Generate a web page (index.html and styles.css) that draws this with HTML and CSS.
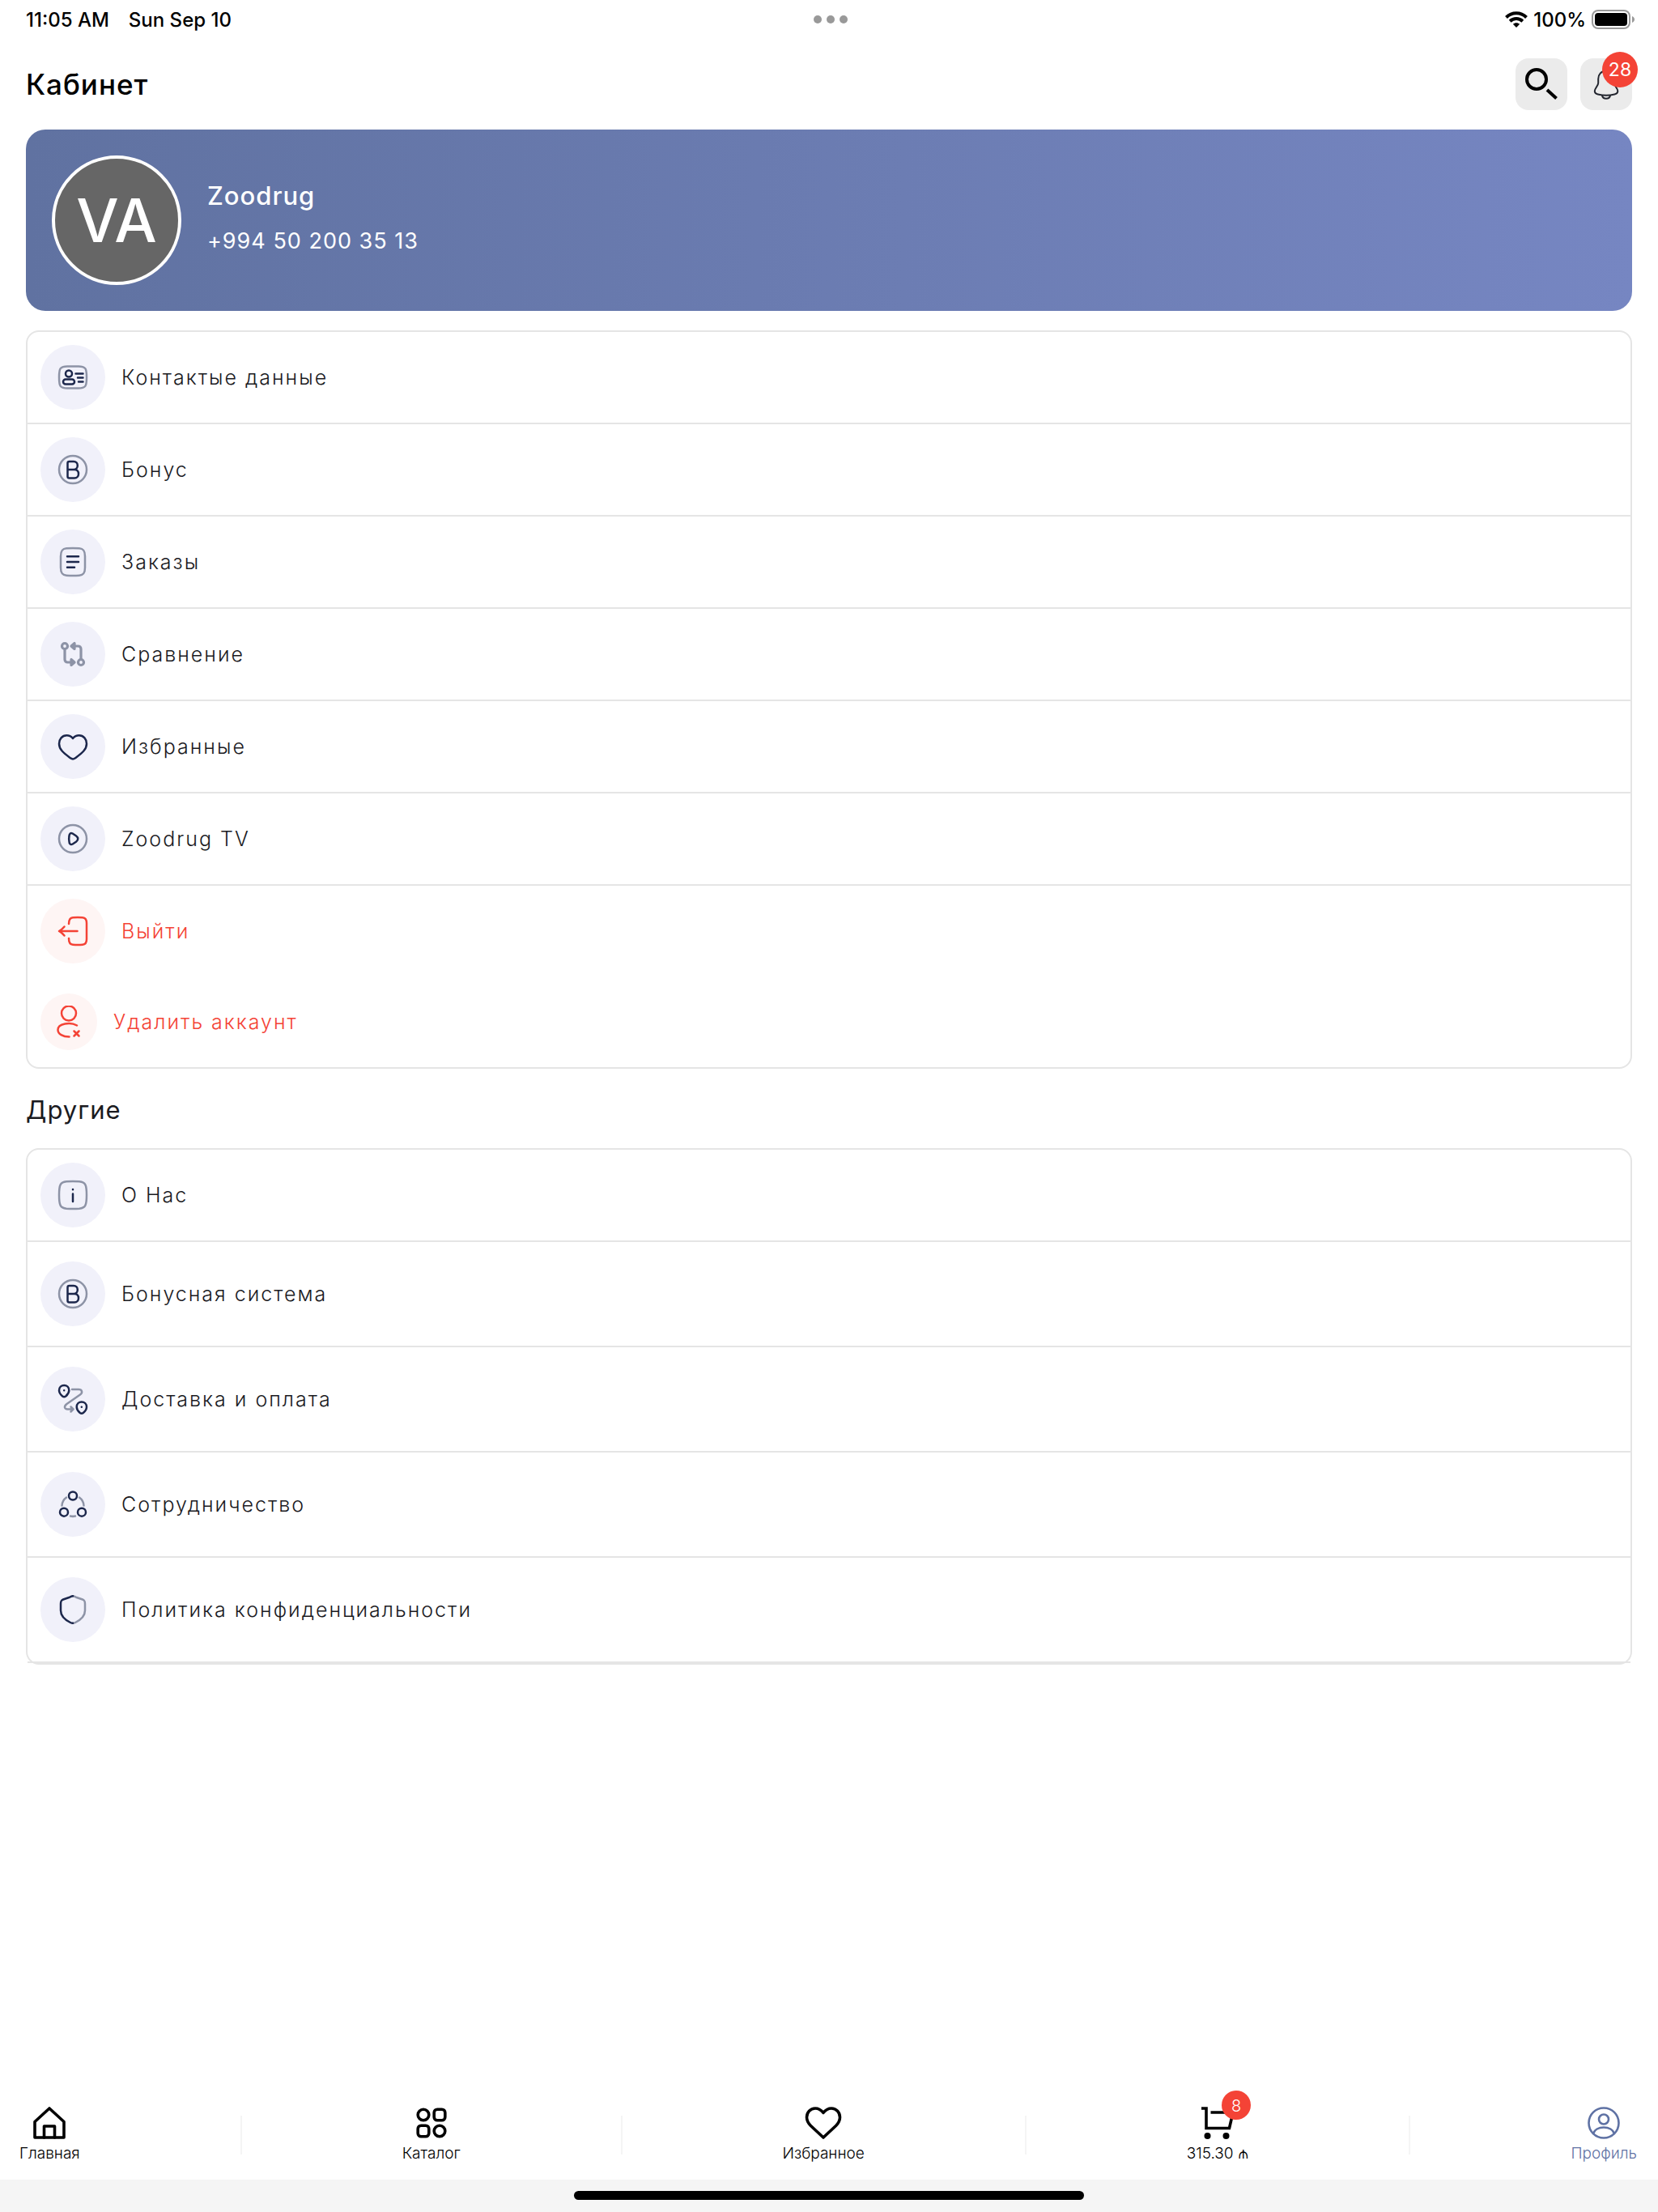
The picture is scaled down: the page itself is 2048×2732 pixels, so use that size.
FILE: index.html
```html
<!DOCTYPE html>
<html lang="ru">
<head>
    <meta charset="UTF-8">
    <meta name="viewport" content="width=device-width, initial-scale=1.0">
    <title>Кабинет</title>
    <link rel="stylesheet" href="styles.css">
</head>
<body>
    <div class="status-bar">
        <div class="status-left">
            <span>11:05 AM</span>
            <span>Sun Sep 10</span>
        </div>
        <div class="status-dots"><i></i><i></i><i></i></div>
        <div class="status-right">
            <svg class="wifi" viewBox="0 0 28 20" aria-hidden="true">
                <path d="M1.5 7.5C8.5 .5 19.5 .5 26.500 7.5" />
                <path d="M6.200 12.200C10.500 8 17.500 8 21.800 12.200" />
                <path class="fill" d="M14 20l-4.200-4.200c2.300-2.200 6.100-2.200 8.400 0z" />
            </svg>
            <span>100%</span>
            <svg class="battery" viewBox="0 0 54 24" aria-hidden="true">
                <rect class="shell" x="1" y="1" width="46" height="22" rx="7" />
                <rect x="4" y="4" width="40" height="16" rx="4" />
                <path class="tip" d="M50 8c4 1.500 4 6.500 0 8z" />
            </svg>
        </div>
    </div>

    <header class="header">
        <h1>Кабинет</h1>
        <div class="header-actions">
            <button type="button" class="icon-button" aria-label="Поиск">
                <svg class="search" viewBox="0 0 40 40" aria-hidden="true">
                    <circle cx="14" cy="14" r="12" />
                    <path d="M27 27l11.500 10.500" />
                </svg>
            </button>
            <button type="button" class="icon-button" aria-label="Уведомления">
                <svg class="bell" viewBox="0 0 32 40" aria-hidden="true">
                    <path d="M16 3.500c-6 0-9.800 4.500-9.800 10v5c0 3.500-4.400 6.500-4.400 10 0 2.500 2 3.500 4 4 6.500 1.600 14 1.600 20.500 0 2-.5 4-1.500 4-4 0-3.500-4.500-6.500-4.500-10v-5c0-5.500-3.800-10-9.800-10z" />
                    <path d="M11 34c1 5 9 5 10 0" />
                </svg>
                <span class="badge">28</span>
            </button>
        </div>
    </header>

    <main class="content">
        <section class="profile">
            <div class="avatar">VA</div>
            <div class="profile-text">
                <p class="profile-name">Zoodrug</p>
                <p class="profile-phone">+994 50 200 35 13</p>
            </div>
        </section>

        <nav class="menu">
            <a href="#" class="menu-item">
                <span class="menu-icon">
                    <svg viewBox="0 0 40 40" aria-hidden="true">
                        <path class="light" d="M3 20c0-6 0-9 1.800-11S9 6.500 13 6.500h14c4 0 6.400.5 8.200 2.500S37 14 37 20s0 9-1.800 11-4.200 2.500-8.200 2.500H13c-4 0-6.400-.5-8.200-2.500S3 26 3 20z" />
                        <circle cx="15" cy="15.500" r="4" />
                        <rect x="8" y="22.500" width="14" height="6" rx="3" />
                        <path d="M23.500 15.500h9M26 20.500h6.500M27 25.500h5.500" />
                    </svg>
                </span>
                <span>Контактые данные</span>
            </a>
            <a href="#" class="menu-item">
                <span class="menu-icon">
                    <svg viewBox="0 0 40 40" aria-hidden="true">
                        <circle class="light" cx="20" cy="20" r="17" />
                        <path d="M13.500 12c0-1.200.8-2 2-2h5.500c3 0 4.800 2.200 4.800 5s-1.800 5-4.800 5h-7.500zM13.500 20H22c3 0 5 2.200 5 5.200s-2 5.300-5 5.300h-6.500c-1.200 0-2-.8-2-2z" />
                    </svg>
                </span>
                <span>Бонус</span>
            </a>
            <a href="#" class="menu-item">
                <span class="menu-icon">
                    <svg viewBox="0 0 40 40" aria-hidden="true">
                        <path class="light" d="M5 13c0-7 2-9.300 7-9.700 5-.4 11-.4 16 0 5 .4 7 2.700 7 9.700v14c0 7-2 9.300-7 9.700-5 .4-11 .4-16 0-5-.4-7-2.700-7-9.700z" />
                        <path d="M13 13.300h14M13 20h14M13 26.700h9" />
                    </svg>
                </span>
                <span>Заказы</span>
            </a>
            <a href="#" class="menu-item">
                <span class="menu-icon">
                    <svg class="compare" viewBox="0 0 40 40" aria-hidden="true">
                        <circle cx="10" cy="10" r="3.500" />
                        <circle cx="30" cy="30" r="3.500" />
                        <path d="M10 14v12.500c0 2 1.500 3.500 3.500 3.500h7M30 26V13.500c0-2-1.500-3.500-3.500-3.500h-7" />
                        <path d="M18 26.500v7l4-3.500zM22 6.500v7L18 10z" />
                    </svg>
                </span>
                <span>Сравнение</span>
            </a>
            <a href="#" class="menu-item">
                <span class="menu-icon">
                    <svg viewBox="0 0 40 40" aria-hidden="true">
                        <path d="M20 10c-2.200-2.600-4.800-3.700-7.600-3.700C6.600 6.300 3 11 3 16.500c0 7.500 6 11.700 14 17.800 2.300 1.700 3.700 1.700 6 0 8-6.100 14-10.300 14-17.800C37 11 33.400 6.300 27.600 6.300c-2.800 0-5.400 1.100-7.600 3.700z" />
                    </svg>
                </span>
                <span>Избранные</span>
            </a>
            <a href="#" class="menu-item">
                <span class="menu-icon">
                    <svg viewBox="0 0 40 40" aria-hidden="true">
                        <circle class="light" cx="20" cy="20" r="17" />
                        <path d="M15.500 16.500c0-3 1.800-4.200 4.200-3l4.500 3c2.700 2 2.700 5 0 7l-4.500 3c-2.400 1.200-4.200 0-4.200-3-.4-2-.4-5 0-7z" />
                    </svg>
                </span>
                <span>Zoodrug TV</span>
            </a>
            <a href="#" class="menu-item danger last">
                <span class="menu-icon">
                    <svg viewBox="0 0 40 40" aria-hidden="true">
                        <path d="M15 11c0-5 1.500-7.500 5-7.800 4-.3 8-.3 12 0 3.500.3 5 2.300 5 6.800v20c0 4.500-1.500 6.500-5 6.800-4 .3-8 .3-12 0-3.500-.3-5-2.800-5-7.800" />
                        <path d="M25.500 20H3.500M9.500 14.500C7.500 17 5.500 18.500 3 20c2.500 1.500 4.500 3 6.500 5.500" />
                    </svg>
                </span>
                <span>Выйти</span>
            </a>
            <a href="#" class="menu-item danger compact last">
                <span class="menu-icon">
                    <svg viewBox="0 0 40 40" aria-hidden="true">
                        <circle cx="20" cy="9.500" r="9" />
                        <path d="M30 24.500C22 20 6.500 22 6.500 30c0 5 6 8.500 14 8.500" />
                        <path d="M26.500 31.500l6 6M32.500 31.500l-6 6" />
                    </svg>
                </span>
                <span>Удалить аккаунт</span>
            </a>
        </nav>

        <h2>Другие</h2>

        <nav class="menu tall">
            <a href="#" class="menu-item">
                <span class="menu-icon">
                    <svg viewBox="0 0 40 40" aria-hidden="true">
                        <path class="light" d="M3 20c0-13 1.500-15.800 9-16.700 5-.4 11-.4 16 0 7.500.9 9 3.700 9 16.700s-1.500 15.800-9 16.700c-5 .4-11 .4-16 0C4.500 35.800 3 33 3 20z" />
                        <path d="M20 18.500v9.500M20 13v.2" />
                    </svg>
                </span>
                <span>О Нас</span>
            </a>
            <a href="#" class="menu-item">
                <span class="menu-icon">
                    <svg viewBox="0 0 40 40" aria-hidden="true">
                        <circle class="light" cx="20" cy="20" r="17" />
                        <path d="M13.500 12c0-1.200.8-2 2-2h5.500c3 0 4.800 2.200 4.800 5s-1.800 5-4.800 5h-7.500zM13.500 20H22c3 0 5 2.200 5 5.200s-2 5.300-5 5.300h-6.500c-1.200 0-2-.8-2-2z" />
                    </svg>
                </span>
                <span>Бонусная система</span>
            </a>
            <a href="#" class="menu-item">
                <span class="menu-icon">
                    <svg viewBox="0 0 40 40" aria-hidden="true">
                        <path class="light" d="M19 8h8c4.500 0 5.500 4 2 6.500L12.500 26c-4 3-3 6.500 1 6.500h6M17.500 29.500l3 3-3 3" />
                        <path d="M9.200 3c3.400 0 6.100 2.500 6.100 6.200 0 3.400-2 5.500-4.100 7.300-1.300 1-2.700 1-4 0C5.100 14.700 3 12.600 3 9.200 3 5.500 5.800 3 9.200 3zM9.200 9.200v.1" />
                        <path d="M30.800 23.500c3.400 0 6.200 2.500 6.200 6.200 0 3.400-2.100 5.500-4.200 7.300-1.300 1-2.700 1-4 0-2.100-1.800-4.100-3.900-4.100-7.300 0-3.700 2.700-6.200 6.100-6.200zM30.800 29.700v.1" />
                    </svg>
                </span>
                <span>Доставка и оплата</span>
            </a>
            <a href="#" class="menu-item">
                <span class="menu-icon">
                    <svg viewBox="0 0 40 40" aria-hidden="true">
                        <circle cx="20" cy="9.500" r="5" />
                        <circle cx="9" cy="29.700" r="5" />
                        <circle cx="31" cy="29.700" r="5" />
                        <path class="light" d="M12 11.500C8.500 14 6.700 17.500 6.500 21.500M28 11.500c3.500 2.500 5.300 6 5.500 10M17 34.500c2 .5 4 .5 6 0" />
                    </svg>
                </span>
                <span>Сотрудничество</span>
            </a>
            <a href="#" class="menu-item">
                <span class="menu-icon">
                    <svg viewBox="0 0 40 40" aria-hidden="true">
                        <path class="light" d="M20 3.300c1 0 2 .5 4 1.400l8 2.800c2.500 1 3 2 3 5.500V21c0 8-7 12.500-12 15-1 .5-2 .8-3 .8" />
                        <path d="M20 3.300c-1 0-2 .5-4 1.400L8 7.500C5.500 8.500 5 9.500 5 13v8c0 8 7 12.500 12 15 1 .5 2 .8 3 .8" />
                    </svg>
                </span>
                <span>Политика конфиденциальности</span>
            </a>
        </nav>
    </main>

    <nav class="tab-bar">
        <a href="#" class="tab">
            <svg viewBox="0 0 40 40" aria-hidden="true">
                <path d="M2 18.500L20 2l18 16.500V38H2z" />
                <path d="M13.500 38V24h13v14" />
            </svg>
            <span>Главная</span>
        </a>
        <span class="divider"></span>
        <a href="#" class="tab">
            <svg viewBox="0 0 40 40" aria-hidden="true">
                <circle cx="10" cy="10" r="6.800" />
                <rect x="23.200" y="3.200" width="13.600" height="13.600" rx="4" />
                <rect x="3.200" y="23.200" width="13.600" height="13.600" rx="4" />
                <circle cx="30" cy="30" r="6.800" />
            </svg>
            <span>Каталог</span>
        </a>
        <span class="divider"></span>
        <a href="#" class="tab">
            <svg class="wide" viewBox="0 0 46 40" aria-hidden="true">
                <path d="M23 7.500C20 3.500 17 2 13 2 7 2 2.500 7 2.500 13c0 5 2 7.500 5 10.500L23 38l15.500-14.500c3-3 5-5.500 5-10.500C43.500 7 39 2 33 2c-4 0-7 1.500-10 5.500z" />
            </svg>
            <span>Избранное</span>
        </a>
        <span class="divider"></span>
        <a href="#" class="tab">
            <span class="tab-icon">
                <svg viewBox="0 0 40 40" aria-hidden="true">
                    <path class="sharp" d="M0 2h6v24.500h28.500l4.500-19.500H11.500" />
                    <circle class="dot" cx="7.500" cy="36" r="4" />
                    <circle class="dot" cx="30.500" cy="36" r="4" />
                </svg>
                <span class="badge small">8</span>
            </span>
            <span>315.30 ₼</span>
        </a>
        <span class="divider"></span>
        <a href="#" class="tab active">
            <svg viewBox="0 0 40 40" aria-hidden="true">
                <circle cx="20" cy="20" r="18.500" />
                <circle cx="20" cy="15.500" r="6" />
                <path d="M7 33c1.500-4.500 6.500-7.500 13-7.500S31.500 28.500 33 33" />
            </svg>
            <span>Профиль</span>
        </a>
    </nav>
    <div class="home-area"><div class="home-indicator"></div></div>
</body>
</html>
```
FILE: styles.css
```css
* {
    box-sizing: border-box;
}

body {
    font-family: Inter, 'Liberation Sans', sans-serif;
    margin: 0;
    min-height: 100vh;
    display: flex;
    flex-direction: column;
    background: #fff;
    color: #000;
}

h1, h2, p {
    margin: 0;
}

a {
    color: inherit;
    text-decoration: none;
}

svg {
    display: block;
    fill: none;
    stroke: currentColor;
    stroke-linecap: round;
    stroke-linejoin: round;
}

/* status bar */
.status-bar {
    display: grid;
    grid-template-columns: 1fr auto 1fr;
    align-items: center;
    height: 48px;
    padding: 0 28px 0 32px;
    font-size: 24px;
    font-weight: 500;
}

.status-left {
    display: flex;
    gap: 24px;
}

.status-dots {
    display: flex;
    gap: 6px;
}

.status-dots i {
    width: 10px;
    height: 10px;
    border-radius: 50%;
    background: #999;
}

.status-right {
    display: flex;
    align-items: center;
    justify-content: flex-end;
    gap: 7px;
}

.wifi {
    width: 28px;
    height: 20px;
    stroke-width: 4;
    stroke-linecap: butt;
}

.wifi .fill {
    fill: #000;
    stroke: none;
}

.battery {
    width: 54px;
    height: 24px;
    fill: #000;
    stroke: none;
}

.battery .shell {
    fill: none;
    stroke: #999;
    stroke-width: 2;
}

.battery .tip {
    fill: #999;
}

/* header */
.header {
    display: flex;
    align-items: center;
    justify-content: space-between;
    padding: 24px 32px;
}

h1 {
    font-size: 35px;
    font-weight: 500;
    line-height: 40px;
    letter-spacing: 1px;
}

.header-actions {
    display: flex;
    gap: 16px;
}

.icon-button {
    position: relative;
    display: flex;
    align-items: center;
    justify-content: center;
    width: 64px;
    height: 64px;
    padding: 0;
    border: none;
    border-radius: 16px;
    background: #ebebeb;
    color: #000;
    font-family: inherit;
    cursor: pointer;
}

.search {
    width: 40px;
    height: 40px;
    stroke-width: 4;
    stroke-linecap: butt;
}

.bell {
    width: 32px;
    height: 40px;
    color: #23262f;
    stroke-width: 2;
}

.badge {
    position: absolute;
    top: -8px;
    right: -7px;
    width: 44px;
    height: 44px;
    border-radius: 50%;
    background: #f44336;
    color: #fff;
    font-size: 23px;
    line-height: 44px;
    text-align: center;
}

.badge.small {
    top: -20px;
    right: -21px;
    width: 36px;
    height: 36px;
    font-size: 20px;
    line-height: 38px;
}

/* content */
.content {
    flex: 1;
    padding: 0 32px;
}

.profile {
    display: flex;
    align-items: center;
    gap: 32px;
    padding: 32px;
    margin-bottom: 24px;
    border-radius: 24px;
    background: linear-gradient(90deg, #6072a1, #7686c2);
    color: #fff;
}

.profile-text {
    padding-bottom: 4px;
}

.avatar {
    width: 160px;
    height: 160px;
    border: 4px solid #fff;
    border-radius: 50%;
    background: #666;
    font-size: 74px;
    font-weight: 500;
    line-height: 152px;
    text-align: center;
}

.profile-name {
    margin-bottom: 16px;
    font-size: 31px;
    font-weight: 500;
    line-height: 40px;
    letter-spacing: 1px;
}

.profile-phone {
    font-size: 27px;
    line-height: 40px;
    letter-spacing: 1px;
}

.menu {
    border: 2px solid #e5e5e5;
    border-radius: 16px;
}

.menu-item {
    display: flex;
    align-items: center;
    gap: 20px;
    padding: 16px;
    border-bottom: 2px solid #e5e5e5;
    color: #1b1b1f;
    font-size: 25px;
    font-weight: 300;
    line-height: 30px;
    letter-spacing: 2px;
}

.menu-item.last {
    border-bottom: none;
}

.menu-icon {
    display: flex;
    align-items: center;
    justify-content: center;
    width: 80px;
    height: 80px;
    border-radius: 50%;
    background: #f1f1fa;
    color: #1c274c;
}

.menu-icon svg {
    width: 40px;
    height: 40px;
    stroke-width: 2.5;
}

.menu-icon .light {
    stroke: #8d93a6;
}

.menu-icon .compare {
    color: #8d93a6;
    stroke-width: 3.2;
}

.menu-item.danger {
    color: #f44336;
}

.danger .menu-icon {
    background: #fef5f4;
    color: #f44336;
}

.compact {
    padding: 21px 16px;
}

.compact .menu-icon {
    width: 70px;
    height: 70px;
}

.tall .menu-item + .menu-item {
    padding: 24px 16px;
}

h2 {
    padding: 31px 0 27px;
    color: #1b1b1f;
    font-size: 31px;
    font-weight: 400;
    line-height: 40px;
    letter-spacing: 1px;
}

/* bottom tabs */
.tab-bar {
    display: flex;
    align-items: center;
    justify-content: space-between;
    height: 112px;
    padding: 2px 26px 0 24px;
}

.tab {
    display: flex;
    flex-direction: column;
    align-items: center;
    gap: 6px;
    font-size: 19px;
    font-weight: 300;
    line-height: 24px;
}

.tab svg {
    width: 40px;
    height: 40px;
    stroke-width: 3.6;
}

.tab svg.wide {
    width: 46px;
}

.tab .sharp {
    stroke-linecap: butt;
    stroke-linejoin: miter;
}

.tab .dot {
    fill: currentColor;
    stroke: none;
}

.tab-icon {
    position: relative;
}

.tab.active {
    color: #5f72a4;
}

.tab.active svg {
    stroke-width: 2.6;
}

.divider {
    width: 2px;
    height: 48px;
    background: #f5f5f5;
}

.home-area {
    display: flex;
    justify-content: center;
    height: 40px;
    padding-top: 14px;
    background: #f5f5f5;
}

.home-indicator {
    width: 630px;
    height: 11px;
    border-radius: 6px;
    background: #000;
}
```
